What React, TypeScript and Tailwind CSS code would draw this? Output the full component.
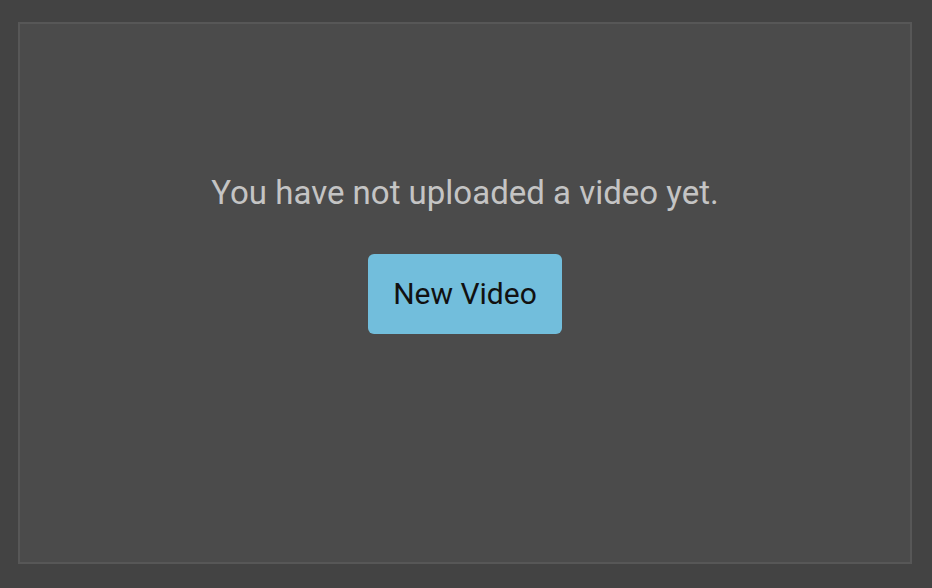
export default function App() {
  return (
    <div className="w-[932px] h-[588px] bg-[#434343] pt-[22px] pl-[18px] pr-[20px]" style={{ fontFamily: 'Roboto, "Liberation Sans", sans-serif' }}>
      <div className="h-[542px] border-2 border-[#575757] bg-[#4b4b4b] flex flex-col items-center pt-[149px]">
        <p className="text-[33px] leading-[40px] text-[#c4c4c4]">You have not uploaded a video yet.</p>
        <button className="mt-[41px] w-[194px] h-[80px] rounded-md bg-[#72bedc] text-[30px] leading-[78px] text-[#111]">
          New Video
        </button>
      </div>
    </div>
  )
}
